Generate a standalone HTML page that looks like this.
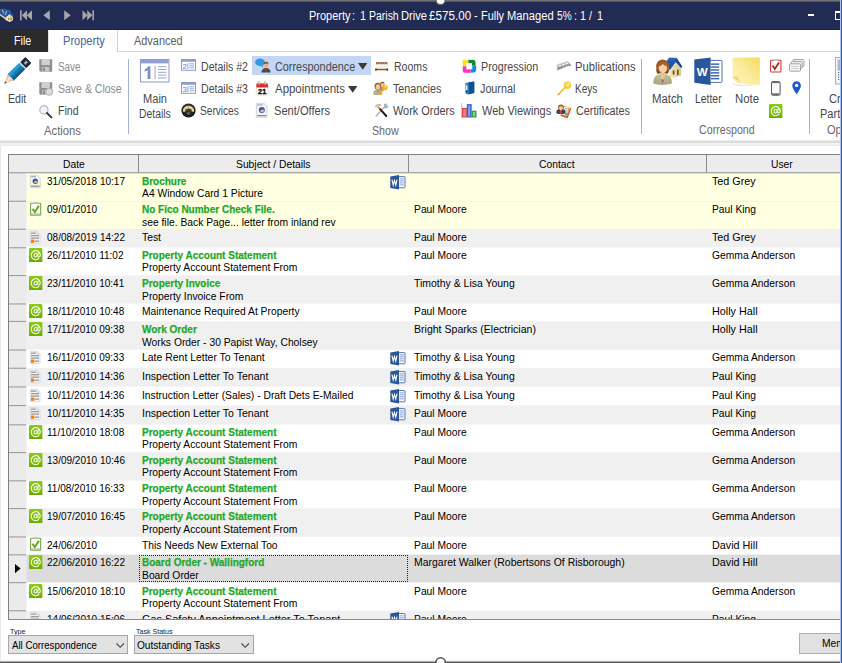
<!DOCTYPE html>
<html><head><meta charset="utf-8"><title>Property</title>
<style>
html,body{margin:0;padding:0;}
body{width:842px;height:663px;overflow:hidden;position:relative;background:#fff;font-family:"Liberation Sans",sans-serif;}
.t{position:absolute;white-space:nowrap;line-height:1;transform-origin:0 50%;}
.b{position:absolute;}
svg{position:absolute;overflow:visible;}
</style></head><body>

<div class="b" style="left:0px;top:0px;width:842px;height:30px;background:#212b53;"></div>
<div class="b" style="left:0px;top:29px;width:842px;height:1px;background:#1a2247;"></div>
<div class="b" style="left:0px;top:0px;width:842px;height:1px;background:#707070;"></div>
<div class="b" style="left:0px;top:1px;width:842px;height:1px;background:#2e5eac;"></div>
<div class="t " style="left:308.90px;top:10px;font-size:12px;color:#fff;transform:translateY(0.3px) scaleX(0.9129);">Property</div>
<div class="t " style="left:352.40px;top:10px;font-size:12px;color:#fff;transform:translateY(0.3px) scaleX(0.9000);">:</div>
<div class="t " style="left:360.00px;top:10px;font-size:12px;color:#fff;transform:translateY(0.3px) scaleX(0.9000);">1</div>
<div class="t " style="left:368.70px;top:10px;font-size:12px;color:#fff;transform:translateY(0.3px) scaleX(0.8732);">Parish</div>
<div class="t " style="left:401.00px;top:10px;font-size:12px;color:#fff;transform:translateY(0.3px) scaleX(0.9285);">Drive</div>
<div class="t " style="left:428.60px;top:10px;font-size:12px;color:#fff;transform:translateY(0.3px) scaleX(0.9707);">£575.00</div>
<div class="t " style="left:474.40px;top:10px;font-size:12px;color:#fff;transform:translateY(0.3px) scaleX(0.9000);">-</div>
<div class="t " style="left:481.20px;top:10px;font-size:12px;color:#fff;transform:translateY(0.3px) scaleX(0.9078);">Fully</div>
<div class="t " style="left:507.40px;top:10px;font-size:12px;color:#fff;transform:translateY(0.3px) scaleX(0.9314);">Managed</div>
<div class="t " style="left:556.70px;top:10px;font-size:12px;color:#fff;transform:translateY(0.3px) scaleX(0.8476);">5%</div>
<div class="t " style="left:573.70px;top:10px;font-size:12px;color:#fff;transform:translateY(0.3px) scaleX(0.9000);">:</div>
<div class="t " style="left:580.40px;top:10px;font-size:12px;color:#fff;transform:translateY(0.3px) scaleX(0.9000);">1</div>
<div class="t " style="left:588.90px;top:10px;font-size:12px;color:#fff;transform:translateY(0.3px) scaleX(0.9000);">/</div>
<div class="t " style="left:597.10px;top:10px;font-size:12px;color:#fff;transform:translateY(0.3px) scaleX(0.9000);">1</div>
<svg style="left:0px;top:9px" width="14" height="13.5" viewBox="0 0 14 13.5"><path d="M0 4.4L5.4 8.2V10.4L0 6.6z" fill="#e3d08a"/><path d="M5.2 8.3L9.5 4.9L12.9 7.8L13 11L9.6 12.9L5.4 11z" fill="#f0e2a4"/><path d="M9.5 4.9L12.9 7.8L13 11L9.6 12.9z" fill="#e4d28c"/><rect x="8.3" y="8.8" width="0.9" height="2.2" fill="#6a5e36"/><rect x="10.6" y="8.6" width="0.9" height="2.4" fill="#6a5e36"/><path d="M0 0.6L3.4 0.1L8.2 1.5L10.8 2.5L13.6 6.8L12.6 7.8L9.6 4.7L5.5 8.5L0 4.6z" fill="#2254ae"/><path d="M2.2 0.9L3.8 4.6M6.6 1.9L5.2 6.2" stroke="#e6cf6c" stroke-width="0.9" fill="none"/><path d="M0 0.6L3.4 0.1L8.2 1.5L10.8 2.5" stroke="#4a7ad0" stroke-width="0.6" fill="none"/></svg>
<svg style="left:20px;top:10px" width="13" height="11" viewBox="0 0 13 11"><rect x="0" y="0.3" width="1.6" height="10" fill="#a6a6a8"/><path d="M7 0.3v10L1.8 5.3z" fill="#a6a6a8"/><path d="M12 0.3v10L6.8 5.3z" fill="#a6a6a8"/></svg>
<svg style="left:43px;top:10px" width="8" height="11" viewBox="0 0 8 11"><path d="M6.8 0.3v10L0.3 5.3z" fill="#a6a6a8"/></svg>
<svg style="left:64px;top:10px" width="8" height="11" viewBox="0 0 8 11"><path d="M0.2 0.3v10L6.7 5.3z" fill="#a6a6a8"/></svg>
<svg style="left:81.5px;top:10px" width="13" height="11" viewBox="0 0 13 11"><rect x="10.4" y="0.3" width="1.6" height="10" fill="#a6a6a8"/><path d="M0.5 0.3v10L5.7 5.3z" fill="#a6a6a8"/><path d="M5.2 0.3v10L10.4 5.3z" fill="#a6a6a8"/></svg>
<div class="b" style="left:807.5px;top:14px;width:6.5px;height:2px;background:#fff"></div>
<div class="b" style="left:835px;top:10.5px;width:10px;height:9px;border:1.3px solid #fff;border-top-width:2.4px;box-sizing:border-box"></div>
<div class="b" style="left:0px;top:30px;width:842px;height:22px;background:#fff;"></div>
<div class="b" style="left:0px;top:30px;width:48px;height:22px;background:#2b2b2b;"></div>
<div class="t " style="left:13.80px;top:35px;font-size:12px;color:#fff;transform:scaleX(0.8896);">File</div>
<div class="b" style="left:117px;top:51px;width:725px;height:1px;background:#d2d2d2;"></div>
<div class="b" style="left:48px;top:30px;width:1px;height:22px;background:#e3e3e3;"></div>
<div class="b" style="left:117px;top:30px;width:1px;height:22px;background:#d2d2d2;"></div>
<div class="t " style="left:62.80px;top:34px;font-size:12px;color:#4660a8;transform:translateY(0.9px) scaleX(0.9217);">Property</div>
<div class="t " style="left:134.00px;top:34px;font-size:12px;color:#5e5e5e;transform:translateY(0.9px) scaleX(0.9106);">Advanced</div>
<div class="t " style="left:7.50px;top:93px;font-size:12px;color:#484848;transform:translateY(0.3px) scaleX(0.8850);">Edit</div>
<div class="t " style="left:58.00px;top:60px;font-size:12px;color:#8c8c8c;transform:translateY(0.7px) scaleX(0.8227);">Save</div>
<div class="t " style="left:58.00px;top:83px;font-size:12px;color:#8c8c8c;transform:translateY(0.3px) scaleX(0.8762);">Save &amp; Close</div>
<div class="t " style="left:57.50px;top:105px;font-size:12px;color:#484848;transform:translateY(0.4px) scaleX(0.8782);">Find</div>
<div class="t " style="left:44.00px;top:124px;font-size:12px;color:#6a6a6a;transform:translateY(0.9px) scaleX(0.9403);">Actions</div>
<div class="b" style="left:128px;top:59px;width:1px;height:75px;background:#a3b3d3;"></div>
<div class="t " style="left:143.00px;top:93px;font-size:12px;color:#484848;transform:translateY(0.3px) scaleX(0.9228);">Main</div>
<div class="t " style="left:139.00px;top:108px;font-size:12px;color:#484848;transform:translateY(0.3px) scaleX(0.8643);">Details</div>
<div class="t " style="left:201.00px;top:60px;font-size:12px;color:#484848;transform:translateY(0.7px) scaleX(0.8808);">Details #2</div>
<div class="t " style="left:201.00px;top:83px;font-size:12px;color:#484848;transform:translateY(0.1px) scaleX(0.8808);">Details #3</div>
<div class="t " style="left:200.00px;top:105px;font-size:12px;color:#484848;transform:translateY(0.4px) scaleX(0.8432);">Services</div>
<div class="b" style="left:252px;top:56px;width:119px;height:19px;background:#c3d6f3;"></div>
<div class="t " style="left:274.60px;top:60px;font-size:12px;color:#484848;transform:translateY(0.7px) scaleX(0.9040);">Correspondence</div>
<div class="t " style="left:274.60px;top:83px;font-size:12px;color:#484848;transform:translateY(0.1px) scaleX(0.9540);">Appointments</div>
<div class="t " style="left:273.60px;top:105px;font-size:12px;color:#484848;transform:translateY(0.4px) scaleX(0.9261);">Sent/Offers</div>
<div class="t " style="left:393.60px;top:60px;font-size:12px;color:#484848;transform:translateY(0.7px) scaleX(0.8788);">Rooms</div>
<div class="t " style="left:392.50px;top:83px;font-size:12px;color:#484848;transform:translateY(0.1px) scaleX(0.8939);">Tenancies</div>
<div class="t " style="left:393.30px;top:105px;font-size:12px;color:#484848;transform:translateY(0.4px) scaleX(0.9103);">Work Orders</div>
<div class="t " style="left:371.60px;top:124px;font-size:12px;color:#6a6a6a;transform:translateY(0.9px) scaleX(0.8895);">Show</div>
<div class="t " style="left:480.80px;top:60px;font-size:12px;color:#484848;transform:translateY(0.7px) scaleX(0.8934);">Progression</div>
<div class="t " style="left:480.00px;top:83px;font-size:12px;color:#484848;transform:translateY(0.1px) scaleX(0.8970);">Journal</div>
<div class="t " style="left:481.60px;top:105px;font-size:12px;color:#484848;transform:translateY(0.4px) scaleX(0.9154);">Web Viewings</div>
<div class="t " style="left:575.30px;top:60px;font-size:12px;color:#484848;transform:translateY(0.7px) scaleX(0.9350);">Publications</div>
<div class="t " style="left:575.30px;top:83px;font-size:12px;color:#484848;transform:translateY(0.1px) scaleX(0.8322);">Keys</div>
<div class="t " style="left:576.30px;top:105px;font-size:12px;color:#484848;transform:translateY(0.4px) scaleX(0.8998);">Certificates</div>
<div class="b" style="left:641px;top:59px;width:1px;height:75px;background:#a3b3d3;"></div>
<div class="t " style="left:651.60px;top:93px;font-size:12px;color:#484848;transform:translateY(0.3px) scaleX(0.9457);">Match</div>
<div class="t " style="left:694.90px;top:93px;font-size:12px;color:#484848;transform:translateY(0.3px) scaleX(0.8669);">Letter</div>
<div class="t " style="left:734.60px;top:93px;font-size:12px;color:#484848;transform:translateY(0.3px) scaleX(0.9508);">Note</div>
<div class="t " style="left:698.60px;top:124px;font-size:12px;color:#6a6a6a;transform:translateY(0.3px) scaleX(0.8884);">Correspond</div>
<div class="b" style="left:809px;top:59px;width:1px;height:75px;background:#a3b3d3;"></div>
<div class="t " style="left:828.80px;top:93px;font-size:12px;color:#484848;transform:translateY(0.3px) scaleX(0.9200);">Cre</div>
<div class="t " style="left:820.00px;top:107px;font-size:12px;color:#484848;transform:translateY(0.9px) scaleX(0.9200);">Part</div>
<div class="t " style="left:826.50px;top:124px;font-size:12px;color:#6a6a6a;transform:translateY(0.3px) scaleX(0.9200);">Op</div>
<svg style="left:0px;top:52px" width="36" height="36" viewBox="0 0 36 36"><g transform="translate(4.2 31.8) rotate(45.5) scale(0.94 0.97)"><rect x="-4.6" y="-35" width="9.2" height="8.2" rx="1.2" fill="#1b2d3a"/><rect x="-1.2" y="-33" width="2.6" height="3.6" fill="#c9d3da" opacity=".8"/><rect x="-4.6" y="-27.4" width="9.2" height="1.7" fill="#d9e1e6"/><rect x="-4.6" y="-25.8" width="9.2" height="16.4" fill="#177db6"/><rect x="-4.6" y="-25.8" width="3.2" height="16.4" fill="#2a9cd6"/><rect x="1.6" y="-25.8" width="3" height="16.4" fill="#10618f"/><path d="M-4.6-9.6L-1.5-8.4L1.6-9.6L4.6-8.6L4.6-9.8L-4.6-9.8z" fill="#177db6"/><path d="M-4.6-9.6h9.2L1.3-2.8h-2.6z" fill="#f1c2a2"/><path d="M-1.6-9.4h3.2L1-2.8h-1.6z" fill="#f9dfcd"/><path d="M-1.3-2.8h2.6L0 0.2z" fill="#5c5c5c"/></g></svg>
<svg style="left:39px;top:59.3px" width="13.5" height="13" viewBox="0 0 13.5 13"><path d="M0.3 0.3h12.9v12.4H1.6L0.3 11.4z" fill="#909090"/><rect x="2.6" y="0.3" width="8.2" height="5.6" fill="#d6d6d6"/><rect x="2.6" y="2" width="8.2" height="0.7" fill="#c6c6c6"/><rect x="2.6" y="3.7" width="8.2" height="0.7" fill="#c6c6c6"/><rect x="3.2" y="8" width="7" height="4.7" fill="#c9c9c9"/><rect x="4" y="8.8" width="2" height="3.2" fill="#8b8b8b"/></svg>
<svg style="left:39px;top:81.7px" width="13.5" height="13" viewBox="0 0 13.5 13"><path d="M0.3 0.3h12.9v12.4H1.6L0.3 11.4z" fill="#909090"/><rect x="2.6" y="0.3" width="8.2" height="5.6" fill="#d6d6d6"/><rect x="2.6" y="2" width="8.2" height="0.7" fill="#c6c6c6"/><rect x="2.6" y="3.7" width="8.2" height="0.7" fill="#c6c6c6"/><rect x="3.2" y="8" width="7" height="4.7" fill="#c9c9c9"/><rect x="4" y="8.8" width="2" height="3.2" fill="#8b8b8b"/><circle cx="10.2" cy="9.8" r="3.6" fill="#d9d9d9" stroke="#a8a8a8" stroke-width="0.8"/></svg>
<svg style="left:39px;top:105px" width="13.5" height="13.5" viewBox="0 0 13.5 13.5"><circle cx="4.9" cy="4.9" r="4.1" fill="#eef3f8" stroke="#a9b2bd" stroke-width="1.1"/><path d="M8 8l4.4 4.4" stroke="#3a3a3a" stroke-width="2" stroke-linecap="round"/></svg>
<svg style="left:140px;top:59px" width="29.5" height="24" viewBox="0 0 29.5 24"><rect x="0.5" y="0.5" width="28.5" height="22.5" fill="#fff" stroke="#8c9ccf" stroke-width="1"/><rect x="1" y="1" width="27.5" height="3.4" fill="#8f9fd2"/><path d="M10.400 7.200V20H7.600V11.100Q6.400 12.200 4.700 12.800V10.400Q7.300 9.300 8.200 7.200z" fill="#7e8fc6"/><rect x="14.6" y="6.6" width="1" height="13.6" fill="#9aa6cf"/><g fill="#9aa6cf"><rect x="18" y="7.2" width="8.4" height="1"/><rect x="18" y="10" width="8.4" height="1"/><rect x="18" y="12.8" width="8.4" height="1"/><rect x="18" y="15.6" width="8.4" height="1"/><rect x="18" y="18.4" width="8.4" height="1"/></g></svg>
<svg style="left:180.5px;top:59.4px" width="15" height="11.8" viewBox="0 0 15 11.8"><rect x="0.5" y="0.5" width="14" height="10.8" fill="#fff" stroke="#8c9ccf" stroke-width="1"/><rect x="1" y="1" width="13" height="1.8" fill="#8f9fd2"/><text x="1.6" y="9.7" font-family="Liberation Sans" font-size="7.8" fill="#6c7dbd">2</text><rect x="6.4" y="4" width="0.9" height="6" fill="#8c9ccf"/><g fill="#8c9ccf"><rect x="8.4" y="4.4" width="4.8" height="0.9"/><rect x="8.4" y="6.4" width="4.8" height="0.9"/><rect x="8.4" y="8.4" width="4.8" height="0.9"/></g></svg>
<svg style="left:180.5px;top:81.9px" width="15" height="11.8" viewBox="0 0 15 11.8"><rect x="0.5" y="0.5" width="14" height="10.8" fill="#fff" stroke="#8c9ccf" stroke-width="1"/><rect x="1" y="1" width="13" height="1.8" fill="#8f9fd2"/><text x="1.6" y="9.7" font-family="Liberation Sans" font-size="7.8" fill="#6c7dbd">3</text><rect x="6.4" y="4" width="0.9" height="6" fill="#8c9ccf"/><g fill="#8c9ccf"><rect x="8.4" y="4.4" width="4.8" height="0.9"/><rect x="8.4" y="6.4" width="4.8" height="0.9"/><rect x="8.4" y="8.4" width="4.8" height="0.9"/></g></svg>
<svg style="left:180.5px;top:103.2px" width="15" height="14.8" viewBox="0 0 15 14.8"><defs><radialGradient id="gsv" cx="0.5" cy="0.35" r="0.7"><stop offset="0" stop-color="#4a4a4a"/><stop offset="1" stop-color="#0c0c0c"/></radialGradient></defs><circle cx="7.500" cy="7.500" r="7.100" fill="url(#gsv)"/><path d="M1.800 8.400a5.700 5.700 0 0 1 11.400 0l-2.400 0.400a3.300 3.300 0 0 0-6.600 0z" fill="#f3dc98"/><path d="M3.600 5.600l1.400 1.200M7.500 3.400v1.800M11.400 5.600l-1.400 1.200" stroke="#8a7a4a" stroke-width="0.700"/><circle cx="7.500" cy="10.200" r="1.500" fill="#6a6a6a"/><path d="M7.500 10l1.800-4" stroke="#3a3a3a" stroke-width="0.800"/></svg>
<svg style="left:254.5px;top:58px" width="15.5" height="15" viewBox="0 0 15.5 15"><ellipse cx="5" cy="4.2" rx="4.8" ry="3.8" fill="#2f9be8"/><path d="M5.6 7l2.4 3-0.2-3.6z" fill="#2f9be8"/><circle cx="11" cy="7" r="2.6" fill="#e7b48c"/><path d="M8.4 6.6a2.6 2.6 0 0 1 5.2-0.4q-2.4-1.6-5.2 0.4z" fill="#8a4a1e"/><path d="M6.4 14.6q0.4-4.6 4.6-4.6t4.6 4.6z" fill="#4a4a4a"/><path d="M10.2 10.2h1.6l-0.8 3.8z" fill="#c0392b"/></svg>
<svg style="left:255.5px;top:80.6px" width="12.5" height="14.6" viewBox="0 0 12.5 14.6"><rect x="0.4" y="2.4" width="11.6" height="11.6" rx="1.2" fill="#fff" stroke="#cfcfcf" stroke-width="0.7"/><path d="M0.4 3.6q0-1.2 1.2-1.2h9.2q1.2 0 1.2 1.2v3H0.4z" fill="#e0302c"/><rect x="2.4" y="0.4" width="1.5" height="3.4" rx="0.7" fill="#d8d8d8" stroke="#8a8a8a" stroke-width="0.4"/><rect x="8.5" y="0.4" width="1.5" height="3.4" rx="0.7" fill="#d8d8d8" stroke="#8a8a8a" stroke-width="0.4"/><text x="6.2" y="12.8" font-family="Liberation Sans" font-weight="bold" font-size="7.4" fill="#0a0a0a" stroke="#0a0a0a" stroke-width="0.35" text-anchor="middle">21</text></svg>
<svg style="left:256.2px;top:103px" width="11.5" height="14.6" viewBox="0 0 11.5 14.6"><path d="M0.4 0.4h7.6l3 2.8v11h-10.6z" fill="#f3f3f6" stroke="#c4c4cc" stroke-width="0.7"/><rect x="1.2" y="1.4" width="5.4" height="1" fill="#9a9aa2"/><circle cx="5.8" cy="7" r="3" fill="#2a5cc0"/><path d="M3.8 8.8q2-3.8 4.6-1.4l-1.4 1.8z" fill="#f0c040"/><rect x="1.2" y="12" width="9" height="1.3" fill="#8a8a92"/></svg>
<svg style="left:374.5px;top:61.8px" width="13.4" height="9" viewBox="0 0 13.4 9"><rect x="1" y="0.2" width="11.4" height="2.2" fill="#8c5434"/><path d="M2 1.3h9.400" stroke="#d9b9a0" stroke-width="0.7" stroke-dasharray="1.6 0.8"/><rect x="1.2" y="2.4" width="11" height="3.600" fill="#f6f1ec"/><path d="M0.200 6.200q6.500 1.300 13 0v1.700q-6.500 0.900-13 0z" fill="#8a5030"/><rect x="0.300" y="7.300" width="1.500" height="1.600" fill="#6e3c1e"/><rect x="11.600" y="7.300" width="1.500" height="1.600" fill="#6e3c1e"/></svg>
<svg style="left:373.4px;top:80.6px" width="15" height="14.6" viewBox="0 0 15 14.6"><circle cx="9.400" cy="3.200" r="2.100" fill="#e8bc98"/><path d="M7.200 3a2.200 2.200 0 0 1 4.400-0.300q-2.200-1.300-4.400 0.300z" fill="#8a4a1e"/><path d="M6.400 11q0.200-5.400 3-5.400 2.600 0 3 3.200z" fill="#8d9278"/><ellipse cx="4.800" cy="5.200" rx="3.200" ry="3.500" fill="#9a5a28"/><ellipse cx="4.900" cy="5.900" rx="2.200" ry="2.700" fill="#f0c8a4"/><path d="M0.200 13.400q-0.200-4.800 4.600-4.800 4.400 0 4.600 4.800-4.600 1.200-9.200 0z" fill="#b3b48e"/><path d="M4 8.800h1.800l-0.900 3z" fill="#b06a9a"/><circle cx="11.900" cy="6.400" r="2.700" fill="#f5b41e"/><circle cx="12.500" cy="5.600" r="0.800" fill="#fff3c4"/><path d="M10.300 8.200l-4.500 5.400" stroke="#f0a818" stroke-width="1.800"/><path d="M7.600 11.600l1.300 1.100M6.500 12.900l1.200 1" stroke="#f0a818" stroke-width="1.100"/></svg>
<svg style="left:374px;top:103.2px" width="14.4" height="14.6" viewBox="0 0 14.4 14.6"><path d="M12 2.200L2.200 13" stroke="#b4bac2" stroke-width="1.700" stroke-linecap="round"/><path d="M9.800 1.600q1.600-1.500 3.600-0.700l-1.500 1.500 0.800 0.900 1.500-1.400q0.700 1.900-1 3.200-1.400 0.900-2.600 0.100z" fill="#aab0b9"/><path d="M0.800 3.700q1-2.800 4.600-2.900 1.400 0.200 2.200 1.200l-1.400 1.300q-1.400-1-2.800-0.300l-1.200 1.800z" fill="#b9bec6"/><path d="M3.800 3.600l2.600 2.900" stroke="#f08a1c" stroke-width="2"/><path d="M6.300 6.400l6 6.600" stroke="#1e1e1e" stroke-width="2" stroke-linecap="round"/></svg>
<svg style="left:461.6px;top:58.5px" width="15" height="14.6" viewBox="0 0 15 14.6"><g stroke-linejoin="round" stroke-width="0.3"><path d="M0.8 0.9h5.4v3.2H3.8v3.3H0.8z" fill="#ffdf1c" stroke="#ffdf1c"/><path d="M6.6 0.9h4.6q2.2 0 2.2 2.2v3.3h-3.4V4.1H6.6z" fill="#128a32" stroke="#128a32"/><path d="M10.4 6.6h3.6v4.4q0 2.4-2.400 2.400H8.800v-3.100h1.600z" fill="#1488e6" stroke="#1488e6"/><path d="M0.9 7.600h3.300v3h4.200v3.200H3q-2.100 0-2.100-2.100z" fill="#fb33c4" stroke="#fb33c4"/></g></svg>
<svg style="left:464.6px;top:81.4px" width="10" height="14" viewBox="0 0 10 14"><path d="M3.200 1.200L9.400 0.400v11.600L3.200 13.400z" fill="#0e4d8c"/><path d="M5.200 1v11.800M7.300 0.700v11.700" stroke="#1a5c9e" stroke-width="0.600"/><path d="M0.400 2.200L3.200 1.200v12.200L0.400 12.600z" fill="#2c84d4"/><rect x="1" y="4.400" width="1.400" height="4.600" fill="#e8f0fa"/><circle cx="1.700" cy="10.800" r="0.800" fill="#0a1a2c"/></svg>
<svg style="left:461.3px;top:103px" width="16" height="15" viewBox="0 0 16 15"><rect x="0.300" y="0.200" width="0.900" height="14.400" fill="#a9b6d2"/><rect x="0.300" y="13.900" width="15.400" height="0.800" fill="#8f9cb8"/><rect x="1" y="5" width="4.800" height="9" fill="#e8403c"/><rect x="2.300" y="6.200" width="2.200" height="7.200" fill="#f58e8a"/><rect x="5.800" y="1.100" width="4.900" height="12.900" fill="#2f62d8"/><rect x="7.100" y="2.300" width="2.200" height="11" fill="#7fa2ee"/><rect x="10.700" y="7.700" width="4.800" height="6.300" fill="#3a9a48"/><rect x="12" y="8.900" width="2.100" height="4.500" fill="#8ed098"/></svg>
<svg style="left:556px;top:60px" width="16" height="11.5" viewBox="0 0 16 11.5"><defs><linearGradient id="gp" x1="0.3" y1="0" x2="0.6" y2="1"><stop offset="0" stop-color="#dcdcdc"/><stop offset="0.45" stop-color="#a8a8a8"/><stop offset="1" stop-color="#5e5e5e"/></linearGradient></defs><path d="M0.900 4.800L11.700 1.100L15 5L1.200 10.500z" fill="url(#gp)" stroke="#e6dcc4" stroke-width="0.700" stroke-linejoin="round"/><path d="M2.600 6.300L11.800 3.100" stroke="#f6f6f6" stroke-width="1.300" stroke-dasharray="2.600 1"/><path d="M13.200 5.200l1.200 0.300" stroke="#3a3a3a" stroke-width="1"/></svg>
<svg style="left:557px;top:81.2px" width="14.6" height="14.8" viewBox="0 0 14.6 14.8"><circle cx="10.400" cy="4.200" r="3.700" fill="#f7cb3a"/><circle cx="10.600" cy="3.900" r="2.100" fill="#fbe07a"/><circle cx="11.800" cy="2.700" r="0.800" fill="#fff6d0"/><path d="M7.900 6.700L0.900 13.700" stroke="#f5b62c" stroke-width="1.500" stroke-linecap="round"/><path d="M3.200 11.600l1.200 1.200M1.800 13l1 1" stroke="#f0a81c" stroke-width="0.900"/></svg>
<svg style="left:556px;top:103px" width="15.5" height="15.2" viewBox="0 0 15.5 15.2"><path d="M7.200 2.800L13.600 4.300L11.400 14.200L4.800 12.200z" fill="#e88a3a"/><path d="M4.700 12L11.200 14.500L14.700 5.100" fill="none" stroke="#d06818" stroke-width="1.500" stroke-linejoin="round"/><path d="M6.500 3.500L12.700 4.200L10.600 12.800L5.300 11.300z" fill="#eef3fa"/><path d="M8.600 5.200l3.200 0.500M8.400 6.900l3 0.500M8.200 8.600l2.800 0.500" stroke="#9aa4b8" stroke-width="0.800"/><rect x="9" y="10.200" width="1.800" height="1.800" fill="#3a8ae8" transform="rotate(12 9.900 11.100)"/><ellipse cx="4.900" cy="4.300" rx="2.900" ry="2.700" fill="#a05a24"/><ellipse cx="4.900" cy="5.300" rx="2" ry="2.300" fill="#f2c9a0"/><path d="M0.300 10.200q-0.200-3.800 3-4l1.600 0.400 1.600-0.400q3.200 0.200 3 4-4.600 1.800-9.200 0z" fill="#39424e"/><path d="M4.100 6.500h1.600l0.400 3.800-1.200 0.800-1.200-0.800z" fill="#d03a48"/><path d="M3.600 6.300l1.300 1.300 1.300-1.300-0.500-0.400h-1.600z" fill="#f4f4f4"/></svg>
<svg style="left:652.5px;top:57px" width="30.5" height="28.5" viewBox="0 0 30.5 28.5"><defs><linearGradient id="gw" x1="0" y1="0" x2="1" y2="0"><stop offset="0" stop-color="#f3e6b4"/><stop offset="1" stop-color="#d9c98c"/></linearGradient><radialGradient id="gs" cx="0.5" cy="0.2" r="0.9"><stop offset="0" stop-color="#c4c39a"/><stop offset="1" stop-color="#a3a27a"/></radialGradient></defs><path d="M23 5.3L16.6 13.7V19.4L20.5 20.6L28.1 18.4V10.4z" fill="url(#gw)"/><path d="M16.6 13.7V19.4L20.5 20.6V12z" fill="#efe2b0"/><rect x="19.7" y="13.4" width="1.7" height="4.2" fill="#5b5236"/><rect x="24.1" y="12.6" width="1.5" height="5.6" fill="#4f4a3c"/><path d="M13.6 4L16.3 0.7L23.6 1L29.3 9.8L28.1 10.8L22.9 5.1L16.6 13.4z" fill="#1f56a8"/><path d="M23.6 1L29.3 9.8L28.1 10.8L22.9 5.1z" fill="#174a98"/><path d="M13.6 4L16.3 0.7L23.6 1L21.6 3.4z" fill="#2a64b8"/><ellipse cx="9.6" cy="9.6" rx="6.5" ry="7.2" fill="#9a5a24"/><path d="M3.4 11.4q-0.6 4 1.6 5.6l3-1.2zM15.8 11.4q0.6 4-1.6 5.6l-3-1.2z" fill="#8a4c1c"/><path d="M0.3 26.6q-0.4-8.4 6.6-9.4l2.7-0.4 2.7 0.4q7 1 6.6 9.4-9.3 2.6-18.6 0z" fill="url(#gs)"/><path d="M7.4 17.4h4.6l-2.3 8z" fill="#f0c39c"/><path d="M8.2 22.4h3l-1.5 4.2z" fill="#a8588e"/><rect x="8.2" y="14.6" width="3" height="4" fill="#eab98f"/><ellipse cx="9.9" cy="10.9" rx="4.2" ry="5.2" fill="#f6cfa8"/><path d="M5.2 9.4q1.2-4.4 5.6-4.2 3.6 0.4 4.2 4.4-3.4-0.4-5.2-2.6-1.6 2.2-4.6 2.4z" fill="#a8642a"/></svg>
<svg style="left:693.5px;top:57.2px" width="28.6" height="28.6" viewBox="0 0 28.6 28.6"><rect x="14" y="3.4" width="14" height="22" rx="1" fill="#fff" stroke="#4a70bc" stroke-width="1"/><g fill="#3f68b6"><rect x="17" y="6.4" width="8.2" height="1.5"/><rect x="17" y="9.3" width="8.2" height="1.5"/><rect x="17" y="12.2" width="8.2" height="1.5"/><rect x="17" y="15.1" width="8.2" height="1.5"/><rect x="17" y="18" width="8.2" height="1.5"/><rect x="17" y="20.9" width="8.2" height="1.5"/></g><path d="M0.3 2.6L16.6 0.5v27.6L0.3 25.8z" fill="#2a569c"/><text x="8.3" y="18.7" font-family="Liberation Sans" font-weight="bold" font-size="11.6" fill="#fff" text-anchor="middle">W</text></svg>
<svg style="left:732px;top:57.2px" width="28.5" height="29" viewBox="0 0 28.5 29"><defs><linearGradient id="gn" x1="0" y1="1" x2="1" y2="0"><stop offset="0" stop-color="#fdf7c0"/><stop offset="0.5" stop-color="#faeb9c"/><stop offset="1" stop-color="#f6d957"/></linearGradient></defs><path d="M0.6 27.2q8 2.2 20 1.2" fill="none" stroke="#e9e9e9" stroke-width="1.2"/><path d="M0.4 0.4h27.4v27.4q-10 0.4-19.6-1.4L0.6 20.6z" fill="url(#gn)"/><path d="M0.6 20.6q3.2-1.6 5-0.6 1.4 2 2.4 6.4-4.400-0.600-7.400-5.800z" fill="#f3d768"/><path d="M0.6 20.6q2.600 0.600 4.200 2.400t3.200 3.400q-4.400-0.400-7.400-5.800z" fill="#fbf0b0"/></svg>
<svg style="left:769.5px;top:59px" width="11.6" height="13.6" viewBox="0 0 11.6 13.6"><rect x="0.6" y="1.2" width="10.4" height="11.8" rx="0.8" fill="#fff" stroke="#c43a3a" stroke-width="1.1"/><rect x="3.4" y="0.2" width="4.6" height="1.8" fill="#c9c9c9"/><path d="M2.6 6.6l2.2 3.4L9 3.6" fill="none" stroke="#c42020" stroke-width="1.8"/></svg>
<svg style="left:788.5px;top:59px" width="15.6" height="12.8" viewBox="0 0 15.6 12.8"><rect x="4" y="0.5" width="11" height="7" rx="1" fill="#f2f2f2" stroke="#9a9a9a" stroke-width="0.9"/><rect x="2.2" y="2.6" width="11" height="7" rx="1" fill="#f2f2f2" stroke="#9a9a9a" stroke-width="0.9"/><rect x="0.5" y="4.8" width="11" height="7.4" rx="1" fill="#f6f6f6" stroke="#9a9a9a" stroke-width="0.9"/><path d="M2.2 7.4h7.6M2.2 9.6h7.6" stroke="#c6c6c6" stroke-width="0.9"/></svg>
<svg style="left:770.6px;top:80.8px" width="9.6" height="14.8" viewBox="0 0 9.6 14.8"><rect x="0.5" y="0.5" width="8.6" height="13.8" rx="1.4" fill="#fff" stroke="#5a5a5a" stroke-width="1"/><rect x="1" y="0.8" width="7.6" height="1.4" fill="#777"/><rect x="1" y="12.2" width="7.6" height="1.8" fill="#777"/></svg>
<svg style="left:792px;top:81.2px" width="9.2" height="13.4" viewBox="0 0 9.2 13.4"><path d="M4.6 13.2Q0.3 7.6 0.3 4.5a4.3 4.3 0 0 1 8.6 0Q8.9 7.6 4.6 13.2z" fill="#1c57d4"/><circle cx="4.6" cy="4.4" r="1.7" fill="#fff"/></svg>
<svg style="left:768.8px;top:103.6px" width="13.4" height="14.1" viewBox="0 0 13.4 14.1"><defs><linearGradient id="ga" x1="0" y1="0" x2="0" y2="1"><stop offset="0" stop-color="#8ccc18"/><stop offset="0.8" stop-color="#74b600"/><stop offset="1" stop-color="#6aa800"/></linearGradient></defs><rect x="0" y="0" width="13.4" height="14.1" rx="0.9" fill="url(#ga)"/><g fill="none" stroke="#fff" stroke-linecap="round"><path d="M9.900 10.500A4.500 4.600 0 1 1 11.200 6.400Q11.400 9 9.800 9Q8.500 8.900 8.800 7.300L9.200 5" stroke-width="1.05"/><ellipse cx="6.600" cy="7.100" rx="1.500" ry="1.900" stroke-width="1.05" transform="rotate(12 6.600 7.100)"/></g></svg>
<svg style="left:358px;top:63.3px" width="9.4" height="7" viewBox="0 0 9.4 7"><path d="M0 0h9.4L4.7 6.8z" fill="#3a3a3a"/></svg>
<svg style="left:348px;top:85.7px" width="9.4" height="7" viewBox="0 0 9.4 7"><path d="M0 0h9.4L4.7 6.8z" fill="#3a3a3a"/></svg>
<svg style="left:835px;top:57px" width="8" height="28" viewBox="0 0 8 28"><rect x="0.500" y="0.500" width="10" height="26.500" fill="#f2f5fc" stroke="#9bb0dc" stroke-width="1"/><rect x="2.600" y="2.600" width="4" height="11" fill="#a9b6d4"/><path d="M3.600 15v9" stroke="#5a6580" stroke-width="1.200" stroke-dasharray="1 1.300"/></svg>
<div class="b" style="left:0px;top:140px;width:842px;height:6px;background:#f0f0f0;"></div>
<div class="b" style="left:0px;top:140px;width:842px;height:1px;background:#e8e8e8;"></div>
<div class="b" style="left:0px;top:141px;width:842px;height:1px;background:#dedede;"></div>
<div class="b" style="left:0px;top:142px;width:842px;height:1px;background:#d8d8d8;"></div>
<div class="b" style="left:0px;top:143px;width:842px;height:1px;background:#f5f5f5;"></div>
<div class="b" style="left:0px;top:144px;width:842px;height:1px;background:#f2f2f2;"></div>
<div class="b" style="left:0px;top:145px;width:842px;height:1px;background:#ececec;"></div>
<div class="b" style="left:0px;top:146px;width:842px;height:514px;background:#fff;"></div>
<div class="b" style="left:0px;top:146px;width:1px;height:514px;background:#e8e8e8;"></div>
<div class="b" style="left:0px;top:660px;width:842px;height:1px;background:#f0f0f0;"></div>
<div class="b" style="left:0px;top:661px;width:842px;height:1px;background:#b0b0b0;"></div>
<div class="b" style="left:0px;top:662px;width:842px;height:1px;background:#555555;"></div>
<div class="b" style="left:8px;top:154px;width:834px;height:466px;background:#fff;"></div>
<div class="b" style="left:8px;top:154px;width:834px;height:19px;background:#ececec;"></div>
<div class="b" style="left:8px;top:173px;width:834px;height:446px;overflow:hidden;">
<div class="b" style="left:19px;top:0px;width:815px;height:28px;background:#ffffe1;"></div>
<div class="b" style="left:18px;top:0px;width:1px;height:28px;background:#f5f5e6;"></div>
<div class="b" style="left:0px;top:0px;width:18px;height:28px;background:#ebebeb;"></div>
<div class="b" style="left:19px;top:28px;width:815px;height:28px;background:#ffffe1;"></div>
<div class="b" style="left:18px;top:28px;width:1px;height:28px;background:#f5f5e6;"></div>
<div class="b" style="left:0px;top:28px;width:18px;height:28px;background:#ebebeb;"></div>
<div class="b" style="left:19px;top:56px;width:815px;height:18px;background:#f0f0f0;"></div>
<div class="b" style="left:18px;top:56px;width:1px;height:18px;background:#eeeeee;"></div>
<div class="b" style="left:0px;top:56px;width:18px;height:18px;background:#ebebeb;"></div>
<div class="b" style="left:19px;top:74px;width:815px;height:1px;background:#f8f8f8;"></div>
<div class="b" style="left:18px;top:74px;width:1px;height:1px;background:#f2f2f2;"></div>
<div class="b" style="left:0px;top:74px;width:18px;height:1px;background:#ebebeb;"></div>
<div class="b" style="left:19px;top:75px;width:815px;height:27px;background:#ffffff;"></div>
<div class="b" style="left:18px;top:75px;width:1px;height:27px;background:#f5f5f5;"></div>
<div class="b" style="left:0px;top:75px;width:18px;height:27px;background:#ebebeb;"></div>
<div class="b" style="left:19px;top:102px;width:815px;height:1px;background:#f5f5f5;"></div>
<div class="b" style="left:18px;top:102px;width:1px;height:1px;background:#f0f0f0;"></div>
<div class="b" style="left:0px;top:102px;width:18px;height:1px;background:#ebebeb;"></div>
<div class="b" style="left:19px;top:103px;width:815px;height:27px;background:#f0f0f0;"></div>
<div class="b" style="left:18px;top:103px;width:1px;height:27px;background:#eeeeee;"></div>
<div class="b" style="left:0px;top:103px;width:18px;height:27px;background:#ebebeb;"></div>
<div class="b" style="left:19px;top:130px;width:815px;height:1px;background:#f5f5f5;"></div>
<div class="b" style="left:18px;top:130px;width:1px;height:1px;background:#f0f0f0;"></div>
<div class="b" style="left:0px;top:130px;width:18px;height:1px;background:#ebebeb;"></div>
<div class="b" style="left:19px;top:131px;width:815px;height:17px;background:#ffffff;"></div>
<div class="b" style="left:18px;top:131px;width:1px;height:17px;background:#f5f5f5;"></div>
<div class="b" style="left:0px;top:131px;width:18px;height:17px;background:#ebebeb;"></div>
<div class="b" style="left:19px;top:148px;width:815px;height:1px;background:#f3f3f3;"></div>
<div class="b" style="left:18px;top:148px;width:1px;height:1px;background:#efefef;"></div>
<div class="b" style="left:0px;top:148px;width:18px;height:1px;background:#ebebeb;"></div>
<div class="b" style="left:19px;top:149px;width:815px;height:27px;background:#f0f0f0;"></div>
<div class="b" style="left:18px;top:149px;width:1px;height:27px;background:#eeeeee;"></div>
<div class="b" style="left:0px;top:149px;width:18px;height:27px;background:#ebebeb;"></div>
<div class="b" style="left:19px;top:176px;width:815px;height:1px;background:#f3f3f3;"></div>
<div class="b" style="left:18px;top:176px;width:1px;height:1px;background:#efefef;"></div>
<div class="b" style="left:0px;top:176px;width:18px;height:1px;background:#ebebeb;"></div>
<div class="b" style="left:19px;top:177px;width:815px;height:18px;background:#ffffff;"></div>
<div class="b" style="left:18px;top:177px;width:1px;height:18px;background:#f5f5f5;"></div>
<div class="b" style="left:0px;top:177px;width:18px;height:18px;background:#ebebeb;"></div>
<div class="b" style="left:19px;top:195px;width:815px;height:18px;background:#f0f0f0;"></div>
<div class="b" style="left:18px;top:195px;width:1px;height:18px;background:#eeeeee;"></div>
<div class="b" style="left:0px;top:195px;width:18px;height:18px;background:#ebebeb;"></div>
<div class="b" style="left:19px;top:213px;width:815px;height:1px;background:#f5f5f5;"></div>
<div class="b" style="left:18px;top:213px;width:1px;height:1px;background:#f0f0f0;"></div>
<div class="b" style="left:0px;top:213px;width:18px;height:1px;background:#ebebeb;"></div>
<div class="b" style="left:19px;top:214px;width:815px;height:18px;background:#ffffff;"></div>
<div class="b" style="left:18px;top:214px;width:1px;height:18px;background:#f5f5f5;"></div>
<div class="b" style="left:0px;top:214px;width:18px;height:18px;background:#ebebeb;"></div>
<div class="b" style="left:19px;top:232px;width:815px;height:1px;background:#f5f5f5;"></div>
<div class="b" style="left:18px;top:232px;width:1px;height:1px;background:#f0f0f0;"></div>
<div class="b" style="left:0px;top:232px;width:18px;height:1px;background:#ebebeb;"></div>
<div class="b" style="left:19px;top:233px;width:815px;height:18px;background:#f0f0f0;"></div>
<div class="b" style="left:18px;top:233px;width:1px;height:18px;background:#eeeeee;"></div>
<div class="b" style="left:0px;top:233px;width:18px;height:18px;background:#ebebeb;"></div>
<div class="b" style="left:19px;top:251px;width:815px;height:1px;background:#f6f6f6;"></div>
<div class="b" style="left:18px;top:251px;width:1px;height:1px;background:#f0f0f0;"></div>
<div class="b" style="left:0px;top:251px;width:18px;height:1px;background:#ebebeb;"></div>
<div class="b" style="left:19px;top:252px;width:815px;height:27px;background:#ffffff;"></div>
<div class="b" style="left:18px;top:252px;width:1px;height:27px;background:#f5f5f5;"></div>
<div class="b" style="left:0px;top:252px;width:18px;height:27px;background:#ebebeb;"></div>
<div class="b" style="left:19px;top:279px;width:815px;height:1px;background:#f5f5f5;"></div>
<div class="b" style="left:18px;top:279px;width:1px;height:1px;background:#f0f0f0;"></div>
<div class="b" style="left:0px;top:279px;width:18px;height:1px;background:#ebebeb;"></div>
<div class="b" style="left:19px;top:280px;width:815px;height:27px;background:#f0f0f0;"></div>
<div class="b" style="left:18px;top:280px;width:1px;height:27px;background:#eeeeee;"></div>
<div class="b" style="left:0px;top:280px;width:18px;height:27px;background:#ebebeb;"></div>
<div class="b" style="left:19px;top:307px;width:815px;height:1px;background:#f6f6f6;"></div>
<div class="b" style="left:18px;top:307px;width:1px;height:1px;background:#f0f0f0;"></div>
<div class="b" style="left:0px;top:307px;width:18px;height:1px;background:#ebebeb;"></div>
<div class="b" style="left:19px;top:308px;width:815px;height:27px;background:#ffffff;"></div>
<div class="b" style="left:18px;top:308px;width:1px;height:27px;background:#f5f5f5;"></div>
<div class="b" style="left:0px;top:308px;width:18px;height:27px;background:#ebebeb;"></div>
<div class="b" style="left:19px;top:335px;width:815px;height:1px;background:#f5f5f5;"></div>
<div class="b" style="left:18px;top:335px;width:1px;height:1px;background:#f0f0f0;"></div>
<div class="b" style="left:0px;top:335px;width:18px;height:1px;background:#ebebeb;"></div>
<div class="b" style="left:19px;top:336px;width:815px;height:27px;background:#f0f0f0;"></div>
<div class="b" style="left:18px;top:336px;width:1px;height:27px;background:#eeeeee;"></div>
<div class="b" style="left:0px;top:336px;width:18px;height:27px;background:#ebebeb;"></div>
<div class="b" style="left:19px;top:363px;width:815px;height:1px;background:#f4f4f4;"></div>
<div class="b" style="left:18px;top:363px;width:1px;height:1px;background:#f0f0f0;"></div>
<div class="b" style="left:0px;top:363px;width:18px;height:1px;background:#ebebeb;"></div>
<div class="b" style="left:19px;top:364px;width:815px;height:17px;background:#ffffff;"></div>
<div class="b" style="left:18px;top:364px;width:1px;height:17px;background:#f5f5f5;"></div>
<div class="b" style="left:0px;top:364px;width:18px;height:17px;background:#ebebeb;"></div>
<div class="b" style="left:19px;top:381px;width:815px;height:1px;background:#f1f1f1;"></div>
<div class="b" style="left:18px;top:381px;width:1px;height:1px;background:#eeeeee;"></div>
<div class="b" style="left:0px;top:381px;width:18px;height:1px;background:#ebebeb;"></div>
<div class="b" style="left:19px;top:382px;width:815px;height:27px;background:#dcdcdc;"></div>
<div class="b" style="left:18px;top:382px;width:1px;height:27px;background:#e4e4e4;"></div>
<div class="b" style="left:0px;top:382px;width:18px;height:27px;background:#ebebeb;"></div>
<div class="b" style="left:19px;top:409px;width:815px;height:1px;background:#f1f1f1;"></div>
<div class="b" style="left:18px;top:409px;width:1px;height:1px;background:#eeeeee;"></div>
<div class="b" style="left:0px;top:409px;width:18px;height:1px;background:#ebebeb;"></div>
<div class="b" style="left:19px;top:410px;width:815px;height:27px;background:#ffffff;"></div>
<div class="b" style="left:18px;top:410px;width:1px;height:27px;background:#f5f5f5;"></div>
<div class="b" style="left:0px;top:410px;width:18px;height:27px;background:#ebebeb;"></div>
<div class="b" style="left:19px;top:437px;width:815px;height:1px;background:#f8f8f8;"></div>
<div class="b" style="left:18px;top:437px;width:1px;height:1px;background:#f2f2f2;"></div>
<div class="b" style="left:0px;top:437px;width:18px;height:1px;background:#ebebeb;"></div>
<div class="b" style="left:19px;top:438px;width:815px;height:10px;background:#f0f0f0;"></div>
<div class="b" style="left:18px;top:438px;width:1px;height:10px;background:#eeeeee;"></div>
<div class="b" style="left:0px;top:438px;width:18px;height:10px;background:#ebebeb;"></div>
<div class="b" style="left:0px;top:27px;width:18px;height:1px;background:#d3d3d3;"></div>
<div class="b" style="left:0px;top:28px;width:18px;height:1px;background:#acacac;"></div>
<div class="b" style="left:0px;top:55px;width:18px;height:1px;background:#d3d3d3;"></div>
<div class="b" style="left:0px;top:56px;width:18px;height:1px;background:#acacac;"></div>
<div class="b" style="left:0px;top:74px;width:18px;height:1px;background:#acacac;"></div>
<div class="b" style="left:0px;top:75px;width:18px;height:1px;background:#d3d3d3;"></div>
<div class="b" style="left:0px;top:102px;width:18px;height:1px;background:#9c9c9c;"></div>
<div class="b" style="left:0px;top:103px;width:18px;height:1px;background:#e3e3e3;"></div>
<div class="b" style="left:0px;top:130px;width:18px;height:1px;background:#bcbcbc;"></div>
<div class="b" style="left:0px;top:131px;width:18px;height:1px;background:#c4c4c4;"></div>
<div class="b" style="left:0px;top:147px;width:18px;height:1px;background:#e3e3e3;"></div>
<div class="b" style="left:0px;top:148px;width:18px;height:1px;background:#9c9c9c;"></div>
<div class="b" style="left:0px;top:176px;width:18px;height:1px;background:#c4c4c4;"></div>
<div class="b" style="left:0px;top:177px;width:18px;height:1px;background:#bcbcbc;"></div>
<div class="b" style="left:0px;top:194px;width:18px;height:1px;background:#d3d3d3;"></div>
<div class="b" style="left:0px;top:195px;width:18px;height:1px;background:#acacac;"></div>
<div class="b" style="left:0px;top:213px;width:18px;height:1px;background:#bcbcbc;"></div>
<div class="b" style="left:0px;top:214px;width:18px;height:1px;background:#c4c4c4;"></div>
<div class="b" style="left:0px;top:232px;width:18px;height:1px;background:#9c9c9c;"></div>
<div class="b" style="left:0px;top:233px;width:18px;height:1px;background:#e3e3e3;"></div>
<div class="b" style="left:0px;top:251px;width:18px;height:1px;background:#b4b4b4;"></div>
<div class="b" style="left:0px;top:252px;width:18px;height:1px;background:#cbcbcb;"></div>
<div class="b" style="left:0px;top:279px;width:18px;height:1px;background:#9c9c9c;"></div>
<div class="b" style="left:0px;top:280px;width:18px;height:1px;background:#e3e3e3;"></div>
<div class="b" style="left:0px;top:307px;width:18px;height:1px;background:#b4b4b4;"></div>
<div class="b" style="left:0px;top:308px;width:18px;height:1px;background:#cbcbcb;"></div>
<div class="b" style="left:0px;top:335px;width:18px;height:1px;background:#9c9c9c;"></div>
<div class="b" style="left:0px;top:336px;width:18px;height:1px;background:#e3e3e3;"></div>
<div class="b" style="left:0px;top:363px;width:18px;height:1px;background:#bcbcbc;"></div>
<div class="b" style="left:0px;top:364px;width:18px;height:1px;background:#c4c4c4;"></div>
<div class="b" style="left:0px;top:381px;width:18px;height:1px;background:#b4b4b4;"></div>
<div class="b" style="left:0px;top:382px;width:18px;height:1px;background:#cbcbcb;"></div>
<div class="b" style="left:0px;top:409px;width:18px;height:1px;background:#a4a4a4;"></div>
<div class="b" style="left:0px;top:410px;width:18px;height:1px;background:#dbdbdb;"></div>
<div class="b" style="left:0px;top:437px;width:18px;height:1px;background:#acacac;"></div>
<div class="b" style="left:0px;top:438px;width:18px;height:1px;background:#d3d3d3;"></div>
<div class="b" style="left:0px;top:0px;width:18px;height:1px;background:#d2d2d2;"></div>
<div class="b" style="left:19px;top:0px;width:815px;height:1px;background:#e1e1cd;"></div>
<div class="b" style="left:19px;top:28px;width:815px;height:1px;background:#f5f5e4;"></div>
<div class="t " style="left:38.60px;top:2px;font-size:11.4px;color:#000;transform:translateY(1.0px) scaleX(0.8790);">31/05/2018 10:17</div>
<div class="t " style="left:134.30px;top:2px;font-size:11.4px;color:#24a829;font-weight:bold;-webkit-text-stroke:0.25px;transform:translateY(1.0px) scaleX(0.8770);">Brochure</div>
<div class="t " style="left:134.30px;top:15px;font-size:11.4px;color:#000;transform:translateY(0.4px) scaleX(0.9050);">A4 Window Card 1 Picture</div>
<div class="t " style="left:704.00px;top:2px;font-size:11.4px;color:#000;transform:translateY(1.0px) scaleX(0.9427);">Ted Grey</div>
<svg style="left:22.4px;top:1.7999999999999883px" width="10.5" height="13" viewBox="0 0 10.5 13"><path d="M0.3 0.3h7l3 2.8v9.6h-10z" fill="#f3f3f6" stroke="#c4c4cc" stroke-width="0.6"/><rect x="1" y="1.2" width="5" height="1" fill="#9a9aa2"/><circle cx="5.3" cy="6.3" r="2.7" fill="#2a5cc0"/><path d="M3.6 7.8q1.8-3.4 4-1.2l-1.2 1.6z" fill="#f0c040"/><rect x="1" y="10.6" width="8.5" height="1.2" fill="#8a8a92"/></svg>
<svg style="left:382px;top:1.899999999999988px" width="15.5" height="14.5" viewBox="0 0 15.5 14.5"><rect x="7" y="1.6" width="8" height="11.2" rx="0.6" fill="#fff" stroke="#3d66b6" stroke-width="0.9"/><g fill="#7e9bd3"><rect x="9.6" y="3.4" width="4.2" height="1"/><rect x="9.6" y="5.4" width="4.2" height="1"/><rect x="9.6" y="7.4" width="4.2" height="1"/><rect x="9.6" y="9.4" width="4.2" height="1"/></g><path d="M0.3 1.6L9 0.1v14.3L0.3 12.9z" fill="#2b569b"/><path d="M2 4.6l1.2 5.4 1.3-4.4 1.3 4.4 1.2-5.4" fill="none" stroke="#fff" stroke-width="1.15"/></svg>
<div class="t " style="left:38.60px;top:31px;font-size:11.4px;color:#000;transform:translateY(0.1px) scaleX(0.8790);">09/01/2010</div>
<div class="t " style="left:134.30px;top:31px;font-size:11.4px;color:#24a829;font-weight:bold;-webkit-text-stroke:0.25px;transform:translateY(0.1px) scaleX(0.8770);">No Fico Number Check File.</div>
<div class="t " style="left:134.30px;top:43px;font-size:11.4px;color:#000;transform:translateY(0.5px) scaleX(0.9050);">see file. Back Page... letter from inland rev</div>
<div class="t " style="left:405.90px;top:31px;font-size:11.4px;color:#000;transform:translateY(0.1px) scaleX(0.9050);">Paul Moore</div>
<div class="t " style="left:704.00px;top:31px;font-size:11.4px;color:#000;transform:translateY(0.1px) scaleX(0.9017);">Paul King</div>
<svg style="left:21.6px;top:28.80000000000001px" width="11.3" height="13.8" viewBox="0 0 11.3 13.8"><rect x="0.6" y="1.3" width="10.100" height="11.900" rx="0.5" fill="#fafcf6" stroke="#7aa456" stroke-width="1.1"/><rect x="1.100" y="11.400" width="9.100" height="1.300" fill="#a4c48a"/><rect x="3.300" y="0.300" width="4.700" height="1.700" fill="#b9bdc6"/><path d="M2.500 6.900l2.400 3.200L8.900 3.700" fill="none" stroke="#6fa41c" stroke-width="2"/></svg>
<div class="t " style="left:38.60px;top:59px;font-size:11.4px;color:#000;transform:translateY(0.1px) scaleX(0.8790);">08/08/2019 14:22</div>
<div class="t " style="left:134.30px;top:59px;font-size:11.4px;color:#000;transform:translateY(0.1px) scaleX(0.9050);">Test</div>
<div class="t " style="left:405.90px;top:59px;font-size:11.4px;color:#000;transform:translateY(0.1px) scaleX(0.9050);">Paul Moore</div>
<div class="t " style="left:704.00px;top:59px;font-size:11.4px;color:#000;transform:translateY(0.1px) scaleX(0.9427);">Ted Grey</div>
<svg style="left:22.4px;top:58.000000000000014px" width="10.5" height="13" viewBox="0 0 10.5 13"><path d="M0.3 0.3h6.7l3 3v9.4h-9.7z" fill="#f4f4f4" stroke="#c9c9c9" stroke-width="0.6"/><path d="M7 0.3v3h3" fill="#e2e2e2" stroke="#c9c9c9" stroke-width="0.5"/><rect x="1" y="1.6" width="5" height="1.1" fill="#8a8a8a"/><rect x="1" y="4.2" width="8" height="1.1" fill="#8a8a8a"/><rect x="1" y="6.6" width="8" height="1.1" fill="#8a8a8a"/><rect x="4.5" y="9.6" width="4.5" height="1.1" fill="#8a8a8a"/><rect x="1" y="8.6" width="3.2" height="3.2" fill="#ff7a00"/></svg>
<div class="t " style="left:38.60px;top:76px;font-size:11.4px;color:#000;transform:translateY(1.0px) scaleX(0.8790);">26/11/2010 11:02</div>
<div class="t " style="left:134.30px;top:76px;font-size:11.4px;color:#24a829;font-weight:bold;-webkit-text-stroke:0.25px;transform:translateY(1.0px) scaleX(0.8770);">Property Account Statement</div>
<div class="t " style="left:134.30px;top:89px;font-size:11.4px;color:#000;transform:translateY(0.4px) scaleX(0.9050);">Property Account Statement From</div>
<div class="t " style="left:405.90px;top:76px;font-size:11.4px;color:#000;transform:translateY(1.0px) scaleX(0.9050);">Paul Moore</div>
<div class="t " style="left:704.00px;top:76px;font-size:11.4px;color:#000;transform:translateY(1.0px) scaleX(0.9056);">Gemma Anderson</div>
<svg style="left:20.7px;top:74.89999999999999px" width="13.4" height="14.1" viewBox="0 0 13.4 14.1"><defs><linearGradient id="ga" x1="0" y1="0" x2="0" y2="1"><stop offset="0" stop-color="#8ccc18"/><stop offset="0.8" stop-color="#74b600"/><stop offset="1" stop-color="#6aa800"/></linearGradient></defs><rect x="0" y="0" width="13.4" height="14.1" rx="0.9" fill="url(#ga)"/><g fill="none" stroke="#fff" stroke-linecap="round"><path d="M9.900 10.500A4.500 4.600 0 1 1 11.200 6.400Q11.400 9 9.800 9Q8.500 8.900 8.800 7.300L9.200 5" stroke-width="1.05"/><ellipse cx="6.600" cy="7.100" rx="1.500" ry="1.900" stroke-width="1.05" transform="rotate(12 6.600 7.100)"/></g></svg>
<div class="t " style="left:38.60px;top:105px;font-size:11.4px;color:#000;transform:translateY(0.1px) scaleX(0.8790);">23/11/2010 10:41</div>
<div class="t " style="left:134.30px;top:105px;font-size:11.4px;color:#24a829;font-weight:bold;-webkit-text-stroke:0.25px;transform:translateY(0.1px) scaleX(0.8770);">Property Invoice</div>
<div class="t " style="left:134.30px;top:117px;font-size:11.4px;color:#000;transform:translateY(0.5px) scaleX(0.9050);">Property Invoice From</div>
<div class="t " style="left:405.90px;top:105px;font-size:11.4px;color:#000;transform:translateY(0.1px) scaleX(0.9177);">Timothy &amp; Lisa Young</div>
<div class="t " style="left:704.00px;top:105px;font-size:11.4px;color:#000;transform:translateY(0.1px) scaleX(0.9056);">Gemma Anderson</div>
<svg style="left:20.7px;top:103.00000000000001px" width="13.4" height="14.1" viewBox="0 0 13.4 14.1"><defs><linearGradient id="ga" x1="0" y1="0" x2="0" y2="1"><stop offset="0" stop-color="#8ccc18"/><stop offset="0.8" stop-color="#74b600"/><stop offset="1" stop-color="#6aa800"/></linearGradient></defs><rect x="0" y="0" width="13.4" height="14.1" rx="0.9" fill="url(#ga)"/><g fill="none" stroke="#fff" stroke-linecap="round"><path d="M9.900 10.500A4.500 4.600 0 1 1 11.200 6.400Q11.400 9 9.800 9Q8.500 8.900 8.800 7.300L9.200 5" stroke-width="1.05"/><ellipse cx="6.600" cy="7.100" rx="1.500" ry="1.900" stroke-width="1.05" transform="rotate(12 6.600 7.100)"/></g></svg>
<div class="t " style="left:38.60px;top:133px;font-size:11.4px;color:#000;transform:translateY(0.2px) scaleX(0.8790);">18/11/2010 10:48</div>
<div class="t " style="left:134.30px;top:133px;font-size:11.4px;color:#000;transform:translateY(0.2px) scaleX(0.9050);">Maintenance Required At Property</div>
<div class="t " style="left:405.90px;top:133px;font-size:11.4px;color:#000;transform:translateY(0.2px) scaleX(0.9050);">Paul Moore</div>
<div class="t " style="left:704.00px;top:133px;font-size:11.4px;color:#000;transform:translateY(0.2px) scaleX(0.9472);">Holly Hall</div>
<svg style="left:20.7px;top:131.09999999999997px" width="13.4" height="14.1" viewBox="0 0 13.4 14.1"><defs><linearGradient id="ga" x1="0" y1="0" x2="0" y2="1"><stop offset="0" stop-color="#8ccc18"/><stop offset="0.8" stop-color="#74b600"/><stop offset="1" stop-color="#6aa800"/></linearGradient></defs><rect x="0" y="0" width="13.4" height="14.1" rx="0.9" fill="url(#ga)"/><g fill="none" stroke="#fff" stroke-linecap="round"><path d="M9.900 10.500A4.500 4.600 0 1 1 11.200 6.400Q11.400 9 9.800 9Q8.500 8.900 8.800 7.300L9.200 5" stroke-width="1.05"/><ellipse cx="6.600" cy="7.100" rx="1.500" ry="1.900" stroke-width="1.05" transform="rotate(12 6.600 7.100)"/></g></svg>
<div class="t " style="left:38.60px;top:151px;font-size:11.4px;color:#000;transform:translateY(0.3px) scaleX(0.8790);">17/11/2010 09:38</div>
<div class="t " style="left:134.30px;top:151px;font-size:11.4px;color:#24a829;font-weight:bold;-webkit-text-stroke:0.25px;transform:translateY(0.3px) scaleX(0.8770);">Work Order</div>
<div class="t " style="left:134.30px;top:163px;font-size:11.4px;color:#000;transform:translateY(0.7px) scaleX(0.9050);">Works Order - 30 Papist Way, Cholsey</div>
<div class="t " style="left:405.90px;top:151px;font-size:11.4px;color:#000;transform:translateY(0.3px) scaleX(0.9259);">Bright Sparks (Electrician)</div>
<div class="t " style="left:704.00px;top:151px;font-size:11.4px;color:#000;transform:translateY(0.3px) scaleX(0.9472);">Holly Hall</div>
<svg style="left:20.7px;top:149.2px" width="13.4" height="14.1" viewBox="0 0 13.4 14.1"><defs><linearGradient id="ga" x1="0" y1="0" x2="0" y2="1"><stop offset="0" stop-color="#8ccc18"/><stop offset="0.8" stop-color="#74b600"/><stop offset="1" stop-color="#6aa800"/></linearGradient></defs><rect x="0" y="0" width="13.4" height="14.1" rx="0.9" fill="url(#ga)"/><g fill="none" stroke="#fff" stroke-linecap="round"><path d="M9.900 10.500A4.500 4.600 0 1 1 11.200 6.400Q11.400 9 9.800 9Q8.500 8.900 8.800 7.300L9.200 5" stroke-width="1.05"/><ellipse cx="6.600" cy="7.100" rx="1.500" ry="1.900" stroke-width="1.05" transform="rotate(12 6.600 7.100)"/></g></svg>
<div class="t " style="left:38.60px;top:179px;font-size:11.4px;color:#000;transform:translateY(0.1px) scaleX(0.8790);">16/11/2010 09:33</div>
<div class="t " style="left:134.30px;top:179px;font-size:11.4px;color:#000;transform:translateY(0.1px) scaleX(0.9169);">Late Rent Letter To Tenant</div>
<div class="t " style="left:405.90px;top:179px;font-size:11.4px;color:#000;transform:translateY(0.1px) scaleX(0.9177);">Timothy &amp; Lisa Young</div>
<div class="t " style="left:704.00px;top:179px;font-size:11.4px;color:#000;transform:translateY(0.1px) scaleX(0.9056);">Gemma Anderson</div>
<svg style="left:22.4px;top:178.0px" width="10.5" height="13" viewBox="0 0 10.5 13"><path d="M0.3 0.3h6.7l3 3v9.4h-9.7z" fill="#f4f4f4" stroke="#c9c9c9" stroke-width="0.6"/><path d="M7 0.3v3h3" fill="#e2e2e2" stroke="#c9c9c9" stroke-width="0.5"/><rect x="1" y="1.6" width="5" height="1.1" fill="#8a8a8a"/><rect x="1" y="4.2" width="8" height="1.1" fill="#8a8a8a"/><rect x="1" y="6.6" width="8" height="1.1" fill="#8a8a8a"/><rect x="4.5" y="9.6" width="4.5" height="1.1" fill="#8a8a8a"/><rect x="1" y="8.6" width="3.2" height="3.2" fill="#ff7a00"/></svg>
<svg style="left:382px;top:178.0px" width="15.5" height="14.5" viewBox="0 0 15.5 14.5"><rect x="7" y="1.6" width="8" height="11.2" rx="0.6" fill="#fff" stroke="#3d66b6" stroke-width="0.9"/><g fill="#7e9bd3"><rect x="9.6" y="3.4" width="4.2" height="1"/><rect x="9.6" y="5.4" width="4.2" height="1"/><rect x="9.6" y="7.4" width="4.2" height="1"/><rect x="9.6" y="9.4" width="4.2" height="1"/></g><path d="M0.3 1.6L9 0.1v14.3L0.3 12.9z" fill="#2b569b"/><path d="M2 4.6l1.2 5.4 1.3-4.4 1.3 4.4 1.2-5.4" fill="none" stroke="#fff" stroke-width="1.15"/></svg>
<div class="t " style="left:38.60px;top:198px;font-size:11.4px;color:#000;transform:translateY(0.1px) scaleX(0.8790);">10/11/2010 14:36</div>
<div class="t " style="left:134.30px;top:198px;font-size:11.4px;color:#000;transform:translateY(0.1px) scaleX(0.9270);">Inspection Letter To Tenant</div>
<div class="t " style="left:405.90px;top:198px;font-size:11.4px;color:#000;transform:translateY(0.1px) scaleX(0.9177);">Timothy &amp; Lisa Young</div>
<div class="t " style="left:704.00px;top:198px;font-size:11.4px;color:#000;transform:translateY(0.1px) scaleX(0.9017);">Paul King</div>
<svg style="left:22.4px;top:197.0px" width="10.5" height="13" viewBox="0 0 10.5 13"><path d="M0.3 0.3h6.7l3 3v9.4h-9.7z" fill="#f4f4f4" stroke="#c9c9c9" stroke-width="0.6"/><path d="M7 0.3v3h3" fill="#e2e2e2" stroke="#c9c9c9" stroke-width="0.5"/><rect x="1" y="1.6" width="5" height="1.1" fill="#8a8a8a"/><rect x="1" y="4.2" width="8" height="1.1" fill="#8a8a8a"/><rect x="1" y="6.6" width="8" height="1.1" fill="#8a8a8a"/><rect x="4.5" y="9.6" width="4.5" height="1.1" fill="#8a8a8a"/><rect x="1" y="8.6" width="3.2" height="3.2" fill="#ff7a00"/></svg>
<svg style="left:382px;top:197.0px" width="15.5" height="14.5" viewBox="0 0 15.5 14.5"><rect x="7" y="1.6" width="8" height="11.2" rx="0.6" fill="#fff" stroke="#3d66b6" stroke-width="0.9"/><g fill="#7e9bd3"><rect x="9.6" y="3.4" width="4.2" height="1"/><rect x="9.6" y="5.4" width="4.2" height="1"/><rect x="9.6" y="7.4" width="4.2" height="1"/><rect x="9.6" y="9.4" width="4.2" height="1"/></g><path d="M0.3 1.6L9 0.1v14.3L0.3 12.9z" fill="#2b569b"/><path d="M2 4.6l1.2 5.4 1.3-4.4 1.3 4.4 1.2-5.4" fill="none" stroke="#fff" stroke-width="1.15"/></svg>
<div class="t " style="left:38.60px;top:216px;font-size:11.4px;color:#000;transform:translateY(0.7px) scaleX(0.8790);">10/11/2010 14:36</div>
<div class="t " style="left:134.30px;top:216px;font-size:11.4px;color:#000;transform:translateY(0.7px) scaleX(0.9050);">Instruction Letter (Sales) - Draft Dets E-Mailed</div>
<div class="t " style="left:405.90px;top:216px;font-size:11.4px;color:#000;transform:translateY(0.7px) scaleX(0.9177);">Timothy &amp; Lisa Young</div>
<div class="t " style="left:704.00px;top:216px;font-size:11.4px;color:#000;transform:translateY(0.7px) scaleX(0.9017);">Paul King</div>
<svg style="left:22.4px;top:215.59999999999997px" width="10.5" height="13" viewBox="0 0 10.5 13"><path d="M0.3 0.3h6.7l3 3v9.4h-9.7z" fill="#f4f4f4" stroke="#c9c9c9" stroke-width="0.6"/><path d="M7 0.3v3h3" fill="#e2e2e2" stroke="#c9c9c9" stroke-width="0.5"/><rect x="1" y="1.6" width="5" height="1.1" fill="#8a8a8a"/><rect x="1" y="4.2" width="8" height="1.1" fill="#8a8a8a"/><rect x="1" y="6.6" width="8" height="1.1" fill="#8a8a8a"/><rect x="4.5" y="9.6" width="4.5" height="1.1" fill="#8a8a8a"/><rect x="1" y="8.6" width="3.2" height="3.2" fill="#ff7a00"/></svg>
<svg style="left:382px;top:215.59999999999997px" width="15.5" height="14.5" viewBox="0 0 15.5 14.5"><rect x="7" y="1.6" width="8" height="11.2" rx="0.6" fill="#fff" stroke="#3d66b6" stroke-width="0.9"/><g fill="#7e9bd3"><rect x="9.6" y="3.4" width="4.2" height="1"/><rect x="9.6" y="5.4" width="4.2" height="1"/><rect x="9.6" y="7.4" width="4.2" height="1"/><rect x="9.6" y="9.4" width="4.2" height="1"/></g><path d="M0.3 1.6L9 0.1v14.3L0.3 12.9z" fill="#2b569b"/><path d="M2 4.6l1.2 5.4 1.3-4.4 1.3 4.4 1.2-5.4" fill="none" stroke="#fff" stroke-width="1.15"/></svg>
<div class="t " style="left:38.60px;top:235px;font-size:11.4px;color:#000;transform:scaleX(0.8790);">10/11/2010 14:35</div>
<div class="t " style="left:134.30px;top:235px;font-size:11.4px;color:#000;transform:scaleX(0.9270);">Inspection Letter To Tenant</div>
<div class="t " style="left:405.90px;top:235px;font-size:11.4px;color:#000;transform:scaleX(0.9050);">Paul Moore</div>
<div class="t " style="left:704.00px;top:235px;font-size:11.4px;color:#000;transform:scaleX(0.9017);">Paul King</div>
<svg style="left:22.4px;top:233.89999999999998px" width="10.5" height="13" viewBox="0 0 10.5 13"><path d="M0.3 0.3h6.7l3 3v9.4h-9.7z" fill="#f4f4f4" stroke="#c9c9c9" stroke-width="0.6"/><path d="M7 0.3v3h3" fill="#e2e2e2" stroke="#c9c9c9" stroke-width="0.5"/><rect x="1" y="1.6" width="5" height="1.1" fill="#8a8a8a"/><rect x="1" y="4.2" width="8" height="1.1" fill="#8a8a8a"/><rect x="1" y="6.6" width="8" height="1.1" fill="#8a8a8a"/><rect x="4.5" y="9.6" width="4.5" height="1.1" fill="#8a8a8a"/><rect x="1" y="8.6" width="3.2" height="3.2" fill="#ff7a00"/></svg>
<svg style="left:382px;top:233.89999999999998px" width="15.5" height="14.5" viewBox="0 0 15.5 14.5"><rect x="7" y="1.6" width="8" height="11.2" rx="0.6" fill="#fff" stroke="#3d66b6" stroke-width="0.9"/><g fill="#7e9bd3"><rect x="9.6" y="3.4" width="4.2" height="1"/><rect x="9.6" y="5.4" width="4.2" height="1"/><rect x="9.6" y="7.4" width="4.2" height="1"/><rect x="9.6" y="9.4" width="4.2" height="1"/></g><path d="M0.3 1.6L9 0.1v14.3L0.3 12.9z" fill="#2b569b"/><path d="M2 4.6l1.2 5.4 1.3-4.4 1.3 4.4 1.2-5.4" fill="none" stroke="#fff" stroke-width="1.15"/></svg>
<div class="t " style="left:38.60px;top:253px;font-size:11.4px;color:#000;transform:translateY(0.9px) scaleX(0.8790);">11/10/2010 18:08</div>
<div class="t " style="left:134.30px;top:253px;font-size:11.4px;color:#24a829;font-weight:bold;-webkit-text-stroke:0.25px;transform:translateY(0.9px) scaleX(0.8770);">Property Account Statement</div>
<div class="t " style="left:134.30px;top:266px;font-size:11.4px;color:#000;transform:translateY(0.3px) scaleX(0.9050);">Property Account Statement From</div>
<div class="t " style="left:405.90px;top:253px;font-size:11.4px;color:#000;transform:translateY(0.9px) scaleX(0.9050);">Paul Moore</div>
<div class="t " style="left:704.00px;top:253px;font-size:11.4px;color:#000;transform:translateY(0.9px) scaleX(0.9056);">Gemma Anderson</div>
<svg style="left:20.7px;top:251.8px" width="13.4" height="14.1" viewBox="0 0 13.4 14.1"><defs><linearGradient id="ga" x1="0" y1="0" x2="0" y2="1"><stop offset="0" stop-color="#8ccc18"/><stop offset="0.8" stop-color="#74b600"/><stop offset="1" stop-color="#6aa800"/></linearGradient></defs><rect x="0" y="0" width="13.4" height="14.1" rx="0.9" fill="url(#ga)"/><g fill="none" stroke="#fff" stroke-linecap="round"><path d="M9.900 10.500A4.500 4.600 0 1 1 11.200 6.400Q11.400 9 9.800 9Q8.500 8.900 8.800 7.300L9.200 5" stroke-width="1.05"/><ellipse cx="6.600" cy="7.100" rx="1.500" ry="1.900" stroke-width="1.05" transform="rotate(12 6.600 7.100)"/></g></svg>
<div class="t " style="left:38.60px;top:281px;font-size:11.4px;color:#000;transform:translateY(0.9px) scaleX(0.8790);">13/09/2010 10:46</div>
<div class="t " style="left:134.30px;top:281px;font-size:11.4px;color:#24a829;font-weight:bold;-webkit-text-stroke:0.25px;transform:translateY(0.9px) scaleX(0.8770);">Property Account Statement</div>
<div class="t " style="left:134.30px;top:294px;font-size:11.4px;color:#000;transform:translateY(0.3px) scaleX(0.9050);">Property Account Statement From</div>
<div class="t " style="left:405.90px;top:281px;font-size:11.4px;color:#000;transform:translateY(0.9px) scaleX(0.9050);">Paul Moore</div>
<div class="t " style="left:704.00px;top:281px;font-size:11.4px;color:#000;transform:translateY(0.9px) scaleX(0.9056);">Gemma Anderson</div>
<svg style="left:20.7px;top:279.8px" width="13.4" height="14.1" viewBox="0 0 13.4 14.1"><defs><linearGradient id="ga" x1="0" y1="0" x2="0" y2="1"><stop offset="0" stop-color="#8ccc18"/><stop offset="0.8" stop-color="#74b600"/><stop offset="1" stop-color="#6aa800"/></linearGradient></defs><rect x="0" y="0" width="13.4" height="14.1" rx="0.9" fill="url(#ga)"/><g fill="none" stroke="#fff" stroke-linecap="round"><path d="M9.900 10.500A4.500 4.600 0 1 1 11.200 6.400Q11.400 9 9.800 9Q8.500 8.900 8.800 7.300L9.200 5" stroke-width="1.05"/><ellipse cx="6.600" cy="7.100" rx="1.500" ry="1.900" stroke-width="1.05" transform="rotate(12 6.600 7.100)"/></g></svg>
<div class="t " style="left:38.60px;top:310px;font-size:11.4px;color:#000;transform:translateY(0.2px) scaleX(0.8790);">11/08/2010 16:33</div>
<div class="t " style="left:134.30px;top:310px;font-size:11.4px;color:#24a829;font-weight:bold;-webkit-text-stroke:0.25px;transform:translateY(0.2px) scaleX(0.8770);">Property Account Statement</div>
<div class="t " style="left:134.30px;top:322px;font-size:11.4px;color:#000;transform:translateY(0.6px) scaleX(0.9050);">Property Account Statement From</div>
<div class="t " style="left:405.90px;top:310px;font-size:11.4px;color:#000;transform:translateY(0.2px) scaleX(0.9050);">Paul Moore</div>
<div class="t " style="left:704.00px;top:310px;font-size:11.4px;color:#000;transform:translateY(0.2px) scaleX(0.9056);">Gemma Anderson</div>
<svg style="left:20.7px;top:308.09999999999997px" width="13.4" height="14.1" viewBox="0 0 13.4 14.1"><defs><linearGradient id="ga" x1="0" y1="0" x2="0" y2="1"><stop offset="0" stop-color="#8ccc18"/><stop offset="0.8" stop-color="#74b600"/><stop offset="1" stop-color="#6aa800"/></linearGradient></defs><rect x="0" y="0" width="13.4" height="14.1" rx="0.9" fill="url(#ga)"/><g fill="none" stroke="#fff" stroke-linecap="round"><path d="M9.900 10.500A4.500 4.600 0 1 1 11.200 6.400Q11.400 9 9.800 9Q8.500 8.900 8.800 7.300L9.200 5" stroke-width="1.05"/><ellipse cx="6.600" cy="7.100" rx="1.500" ry="1.900" stroke-width="1.05" transform="rotate(12 6.600 7.100)"/></g></svg>
<div class="t " style="left:38.60px;top:338px;font-size:11.4px;color:#000;transform:translateY(0.3px) scaleX(0.8790);">19/07/2010 16:45</div>
<div class="t " style="left:134.30px;top:338px;font-size:11.4px;color:#24a829;font-weight:bold;-webkit-text-stroke:0.25px;transform:translateY(0.3px) scaleX(0.8770);">Property Account Statement</div>
<div class="t " style="left:134.30px;top:350px;font-size:11.4px;color:#000;transform:translateY(0.7px) scaleX(0.9050);">Property Account Statement From</div>
<div class="t " style="left:405.90px;top:338px;font-size:11.4px;color:#000;transform:translateY(0.3px) scaleX(0.9050);">Paul Moore</div>
<div class="t " style="left:704.00px;top:338px;font-size:11.4px;color:#000;transform:translateY(0.3px) scaleX(0.9056);">Gemma Anderson</div>
<svg style="left:20.7px;top:336.2px" width="13.4" height="14.1" viewBox="0 0 13.4 14.1"><defs><linearGradient id="ga" x1="0" y1="0" x2="0" y2="1"><stop offset="0" stop-color="#8ccc18"/><stop offset="0.8" stop-color="#74b600"/><stop offset="1" stop-color="#6aa800"/></linearGradient></defs><rect x="0" y="0" width="13.4" height="14.1" rx="0.9" fill="url(#ga)"/><g fill="none" stroke="#fff" stroke-linecap="round"><path d="M9.900 10.500A4.500 4.600 0 1 1 11.200 6.400Q11.400 9 9.800 9Q8.500 8.900 8.800 7.300L9.200 5" stroke-width="1.05"/><ellipse cx="6.600" cy="7.100" rx="1.500" ry="1.900" stroke-width="1.05" transform="rotate(12 6.600 7.100)"/></g></svg>
<div class="t " style="left:38.60px;top:366px;font-size:11.4px;color:#000;transform:translateY(0.6px) scaleX(0.8790);">24/06/2010</div>
<div class="t " style="left:134.30px;top:366px;font-size:11.4px;color:#000;transform:translateY(0.6px) scaleX(0.9050);">This Needs New External Too</div>
<div class="t " style="left:405.90px;top:366px;font-size:11.4px;color:#000;transform:translateY(0.6px) scaleX(0.9050);">Paul Moore</div>
<div class="t " style="left:704.00px;top:366px;font-size:11.4px;color:#000;transform:translateY(0.6px) scaleX(0.9472);">David Hill</div>
<svg style="left:21.6px;top:364.29999999999995px" width="11.3" height="13.8" viewBox="0 0 11.3 13.8"><rect x="0.6" y="1.3" width="10.100" height="11.900" rx="0.5" fill="#fafcf6" stroke="#7aa456" stroke-width="1.1"/><rect x="1.100" y="11.400" width="9.100" height="1.300" fill="#a4c48a"/><rect x="3.300" y="0.300" width="4.700" height="1.700" fill="#b9bdc6"/><path d="M2.500 6.900l2.400 3.200L8.900 3.700" fill="none" stroke="#6fa41c" stroke-width="2"/></svg>
<div class="t " style="left:38.60px;top:384px;font-size:11.4px;color:#000;transform:translateY(0.4px) scaleX(0.8790);">22/06/2010 16:22</div>
<div class="t " style="left:134.30px;top:384px;font-size:11.4px;color:#24a829;font-weight:bold;-webkit-text-stroke:0.25px;transform:translateY(0.4px) scaleX(0.8770);">Board Order - Wallingford</div>
<div class="t " style="left:134.30px;top:396px;font-size:11.4px;color:#000;transform:translateY(0.8px) scaleX(0.9050);">Board Order</div>
<div class="t " style="left:405.90px;top:384px;font-size:11.4px;color:#000;transform:translateY(0.4px) scaleX(0.9183);">Margaret Walker (Robertsons Of Risborough)</div>
<div class="t " style="left:704.00px;top:384px;font-size:11.4px;color:#000;transform:translateY(0.4px) scaleX(0.9472);">David Hill</div>
<svg style="left:20.7px;top:382.3px" width="13.4" height="14.1" viewBox="0 0 13.4 14.1"><defs><linearGradient id="ga" x1="0" y1="0" x2="0" y2="1"><stop offset="0" stop-color="#8ccc18"/><stop offset="0.8" stop-color="#74b600"/><stop offset="1" stop-color="#6aa800"/></linearGradient></defs><rect x="0" y="0" width="13.4" height="14.1" rx="0.9" fill="url(#ga)"/><g fill="none" stroke="#fff" stroke-linecap="round"><path d="M9.900 10.500A4.500 4.600 0 1 1 11.200 6.400Q11.400 9 9.800 9Q8.500 8.900 8.800 7.300L9.200 5" stroke-width="1.05"/><ellipse cx="6.600" cy="7.100" rx="1.500" ry="1.900" stroke-width="1.05" transform="rotate(12 6.600 7.100)"/></g></svg>
<div class="t " style="left:38.60px;top:412px;font-size:11.4px;color:#000;transform:translateY(0.6px) scaleX(0.8790);">15/06/2010 18:10</div>
<div class="t " style="left:134.30px;top:412px;font-size:11.4px;color:#24a829;font-weight:bold;-webkit-text-stroke:0.25px;transform:translateY(0.6px) scaleX(0.8770);">Property Account Statement</div>
<div class="t " style="left:134.30px;top:424px;font-size:11.4px;color:#000;transform:translateY(1.0px) scaleX(0.9050);">Property Account Statement From</div>
<div class="t " style="left:405.90px;top:412px;font-size:11.4px;color:#000;transform:translateY(0.6px) scaleX(0.9050);">Paul Moore</div>
<div class="t " style="left:704.00px;top:412px;font-size:11.4px;color:#000;transform:translateY(0.6px) scaleX(0.9056);">Gemma Anderson</div>
<svg style="left:20.7px;top:410.49999999999994px" width="13.4" height="14.1" viewBox="0 0 13.4 14.1"><defs><linearGradient id="ga" x1="0" y1="0" x2="0" y2="1"><stop offset="0" stop-color="#8ccc18"/><stop offset="0.8" stop-color="#74b600"/><stop offset="1" stop-color="#6aa800"/></linearGradient></defs><rect x="0" y="0" width="13.4" height="14.1" rx="0.9" fill="url(#ga)"/><g fill="none" stroke="#fff" stroke-linecap="round"><path d="M9.900 10.500A4.500 4.600 0 1 1 11.200 6.400Q11.400 9 9.800 9Q8.500 8.900 8.800 7.300L9.200 5" stroke-width="1.05"/><ellipse cx="6.600" cy="7.100" rx="1.500" ry="1.900" stroke-width="1.05" transform="rotate(12 6.600 7.100)"/></g></svg>
<div class="t " style="left:38.60px;top:440px;font-size:11.4px;color:#000;transform:translateY(0.5px) scaleX(0.8790);">14/06/2010 15:06</div>
<div class="t " style="left:134.30px;top:440px;font-size:11.4px;color:#000;transform:translateY(0.5px) scaleX(0.9569);">Gas Safety Appointment Letter To Tenant</div>
<div class="t " style="left:405.90px;top:440px;font-size:11.4px;color:#000;transform:translateY(0.5px) scaleX(0.9050);">Paul Moore</div>
<div class="t " style="left:704.00px;top:440px;font-size:11.4px;color:#000;transform:translateY(0.5px) scaleX(0.9017);">Paul King</div>
<svg style="left:22.4px;top:439.40000000000003px" width="10.5" height="13" viewBox="0 0 10.5 13"><path d="M0.3 0.3h6.7l3 3v9.4h-9.7z" fill="#f4f4f4" stroke="#c9c9c9" stroke-width="0.6"/><path d="M7 0.3v3h3" fill="#e2e2e2" stroke="#c9c9c9" stroke-width="0.5"/><rect x="1" y="1.6" width="5" height="1.1" fill="#8a8a8a"/><rect x="1" y="4.2" width="8" height="1.1" fill="#8a8a8a"/><rect x="1" y="6.6" width="8" height="1.1" fill="#8a8a8a"/><rect x="4.5" y="9.6" width="4.5" height="1.1" fill="#8a8a8a"/><rect x="1" y="8.6" width="3.2" height="3.2" fill="#ff7a00"/></svg>
<svg style="left:382px;top:439.40000000000003px" width="15.5" height="14.5" viewBox="0 0 15.5 14.5"><rect x="7" y="1.6" width="8" height="11.2" rx="0.6" fill="#fff" stroke="#3d66b6" stroke-width="0.9"/><g fill="#7e9bd3"><rect x="9.6" y="3.4" width="4.2" height="1"/><rect x="9.6" y="5.4" width="4.2" height="1"/><rect x="9.6" y="7.4" width="4.2" height="1"/><rect x="9.6" y="9.4" width="4.2" height="1"/></g><path d="M0.3 1.6L9 0.1v14.3L0.3 12.9z" fill="#2b569b"/><path d="M2 4.6l1.2 5.4 1.3-4.4 1.3 4.4 1.2-5.4" fill="none" stroke="#fff" stroke-width="1.15"/></svg>
<div class="b" style="left:131px;top:382px;width:269px;height:27px;border:1px dotted #222;box-sizing:border-box;"></div>
<svg style="left:7.199999999999999px;top:391.20000000000005px" width="6" height="10" viewBox="0 0 6 10"><path d="M0 0L5.600 4.600L0 9.200Z" fill="#000"/></svg>
</div>
<div class="t " style="left:63.30px;top:158px;font-size:11.4px;color:#000;transform:translateY(0.9px) scaleX(0.9050);">Date</div>
<div class="t " style="left:235.50px;top:158px;font-size:11.4px;color:#000;transform:translateY(0.9px) scaleX(0.9050);">Subject / Details</div>
<div class="t " style="left:539.00px;top:158px;font-size:11.4px;color:#000;transform:translateY(0.9px) scaleX(0.9050);">Contact</div>
<div class="t " style="left:770.50px;top:158px;font-size:11.4px;color:#000;transform:translateY(0.9px) scaleX(0.9050);">User</div>
<div class="b" style="left:138px;top:155px;width:1px;height:18px;background:#8c8c8c;"></div>
<div class="b" style="left:408px;top:155px;width:1px;height:18px;background:#8c8c8c;"></div>
<div class="b" style="left:706px;top:155px;width:1px;height:18px;background:#8c8c8c;"></div>
<div class="b" style="left:8px;top:172px;width:834px;height:1px;background:#a8a8a8;"></div>
<div class="b" style="left:8px;top:154px;width:834px;height:1px;background:#7f7f7f;"></div>
<div class="b" style="left:8px;top:154px;width:1px;height:466px;background:#7f7f7f;"></div>
<div class="b" style="left:8px;top:619px;width:834px;height:1px;background:#8a8a8a;"></div>
<div class="t " style="left:10.40px;top:627px;font-size:7.3px;color:#222;transform:translateY(0.7px) scaleX(0.9731);">Type</div>
<div class="t " style="left:136.00px;top:627px;font-size:7.3px;color:#222;transform:translateY(0.7px) scaleX(0.9674);">Task Status</div>
<div class="b" style="left:8px;top:635px;width:120px;height:19px;background:#e2e2e2;border:1px solid #a6a6a6;box-sizing:border-box;"></div>
<div class="b" style="left:134px;top:635px;width:120px;height:19px;background:#e2e2e2;border:1px solid #a6a6a6;box-sizing:border-box;"></div>
<div class="t " style="left:12.20px;top:640px;font-size:11.4px;color:#000;transform:translateY(0.2px) scaleX(0.8490);">All Correspondence</div>
<div class="t " style="left:136.80px;top:640px;font-size:11.4px;color:#000;transform:translateY(0.2px) scaleX(0.8870);">Outstanding Tasks</div>
<svg style="left:115.5px;top:642.5px" width="9" height="6" viewBox="0 0 9 6"><path d="M0.5 0.5L4.2 4.3L7.9 0.5" fill="none" stroke="#444" stroke-width="1.1"/></svg>
<svg style="left:240.8px;top:642.5px" width="9" height="6" viewBox="0 0 9 6"><path d="M0.5 0.5L4.2 4.3L7.9 0.5" fill="none" stroke="#444" stroke-width="1.1"/></svg>
<div class="b" style="left:799px;top:633px;width:50px;height:21px;background:#e1e1e1;border:1px solid #adadad;box-sizing:border-box;"></div>
<div class="t " style="left:822.30px;top:638px;font-size:11.4px;color:#000;transform:translateY(0.2px) scaleX(0.9050);">Memo</div>
<div class="b" style="left:840px;top:0px;width:1px;height:663px;background:#b4c4e0;"></div>
<div class="b" style="left:841px;top:0px;width:1px;height:663px;background:#2b5ba9;"></div>
<svg style="left:434px;top:-6px" width="13" height="12" viewBox="0 0 13 12"><circle cx="6.6" cy="6" r="4.6" fill="#fff" stroke="#606060" stroke-width="1.4"/></svg>
<svg style="left:434px;top:656px" width="13" height="12" viewBox="0 0 13 12"><circle cx="6.6" cy="6.4" r="4.7" fill="#fff" stroke="#555" stroke-width="1.5"/></svg>
</body></html>
